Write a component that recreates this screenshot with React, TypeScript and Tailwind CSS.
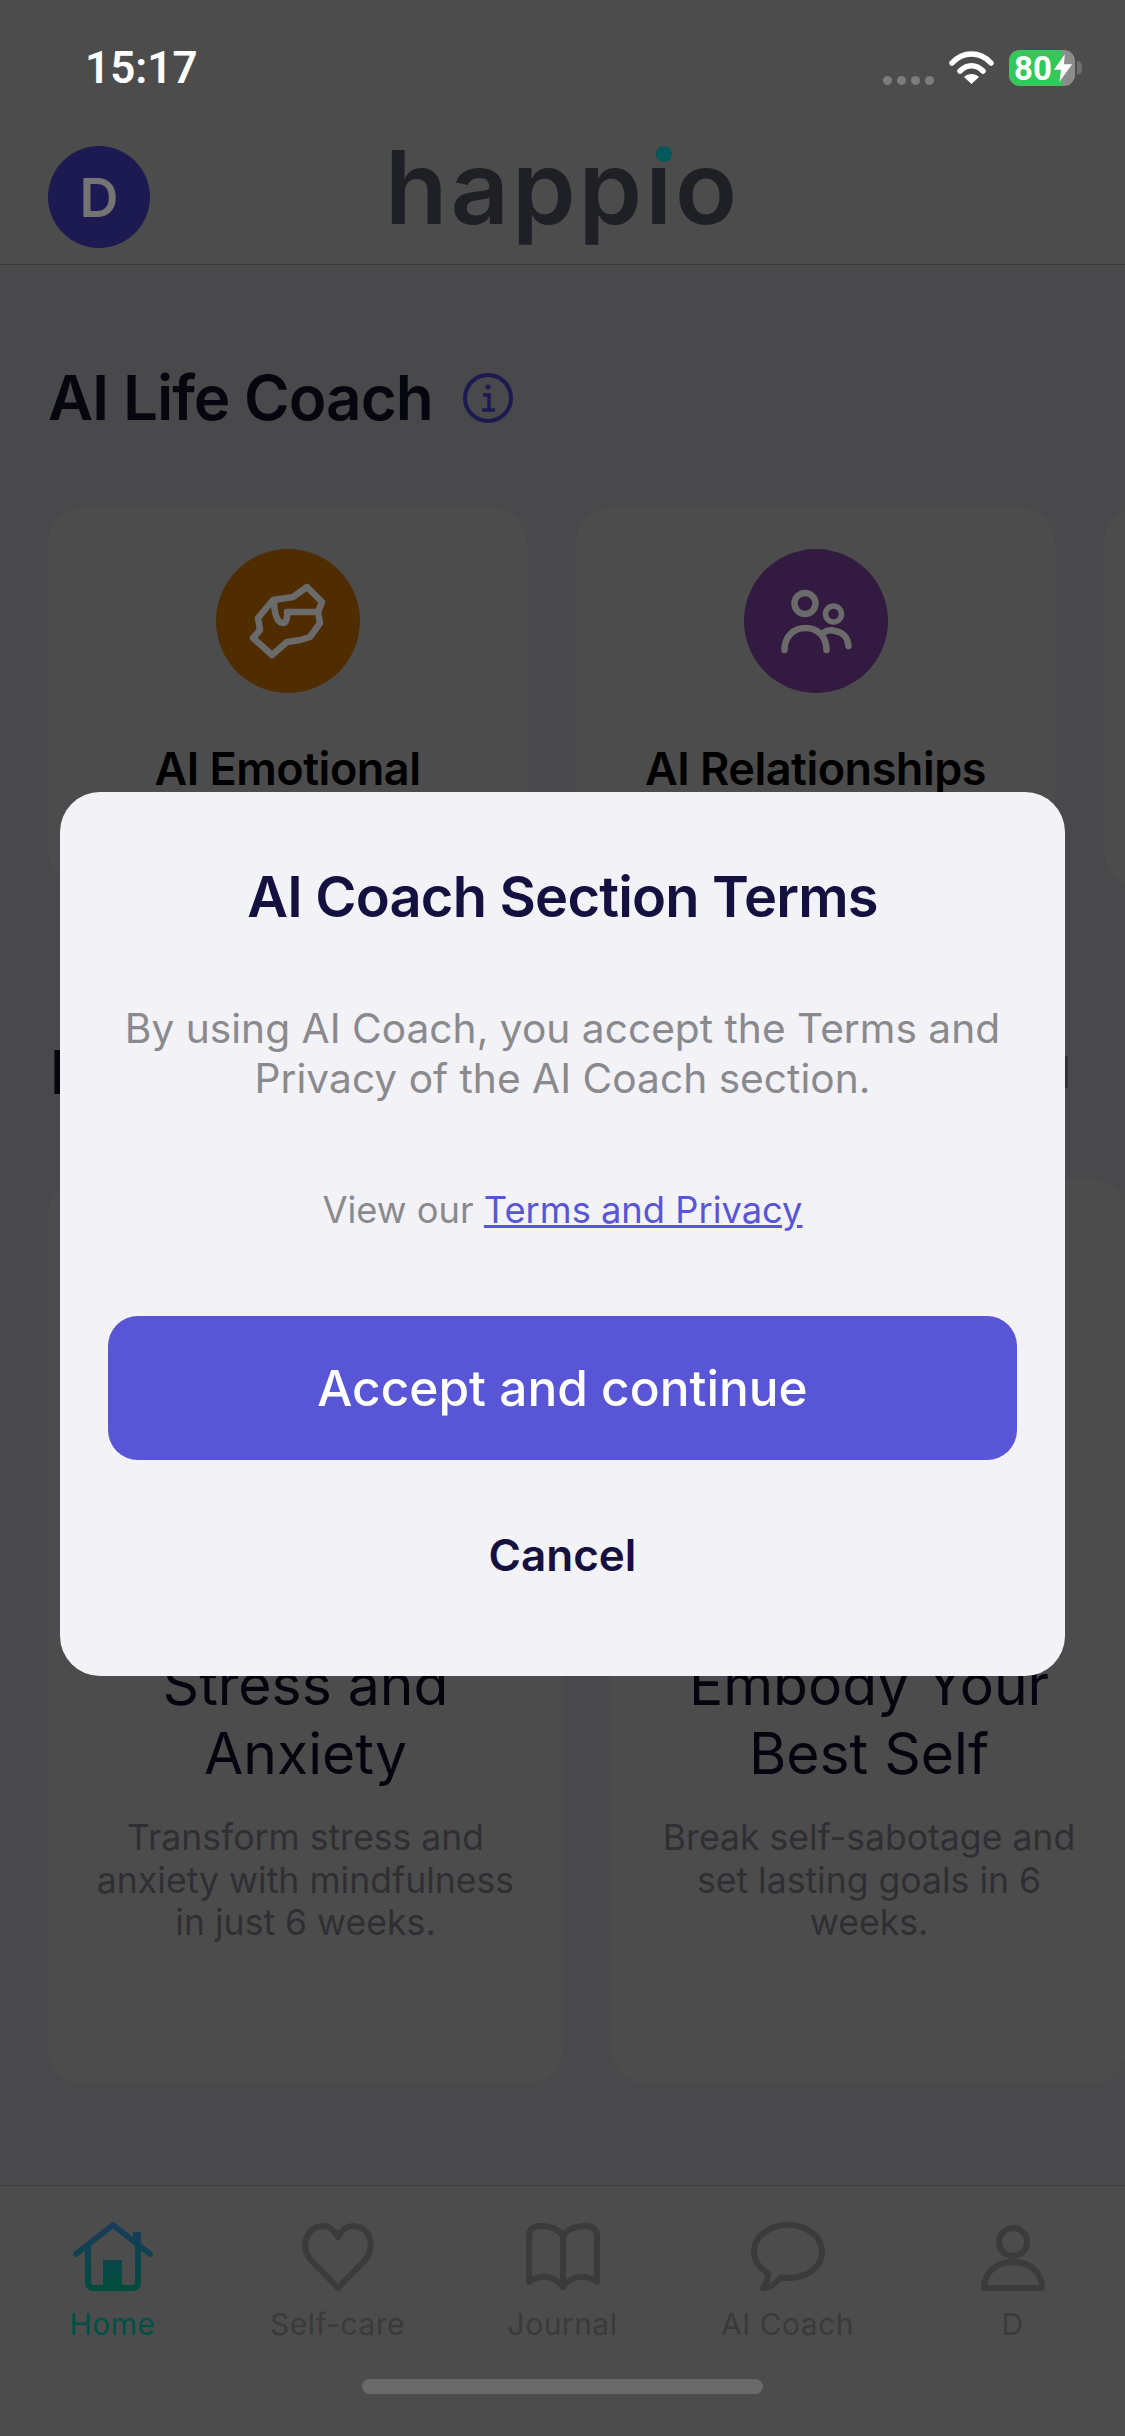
import React from 'react';

const navItems = ['Home', 'Self-care', 'Journal', 'AI Coach', 'D'];

function WifiIcon() {
  return (
    <svg width="45" height="34" viewBox="0 0 45 34" fill="none" stroke="#fff" strokeWidth="5.5" strokeLinecap="round">
      <path d="M3 12C14 0 31 0 42 12" />
      <path d="M11 20C18 13 27 13 34 20" />
      <path d="M22.5 33L15 26C19 22 26 22 30 26Z" fill="#fff" stroke="none" />
    </svg>
  );
}

function BatteryIcon() {
  return (
    <div className="flex items-center gap-[2px]">
      <div className="relative w-[66px] h-[36px] rounded-[11px] bg-[#8c8c8c]">
        <div className="absolute inset-y-0 left-0 w-[53px] rounded-l-[11px] bg-[#34c759]" />
        <div className="absolute inset-0 flex items-center pl-[5px] text-white text-[33px] leading-none font-bold font-['Roboto',sans-serif]">
          80
          <svg width="20" height="30" viewBox="0 0 22 30" fill="#fff" className="ml-[1px]">
            <path d="M13 0L1 17H9L7 30L21 11H12Z" />
          </svg>
        </div>
      </div>
      <div className="w-[5px] h-[14px] rounded-r-full bg-[#6e6e6e]" />
    </div>
  );
}

function StatusBar() {
  return (
    <div className="h-[130px] flex items-center justify-between pl-[85px] pr-[43px] pt-[6px] bg-[#4c4c4c]">
      <span className="text-white text-[44px] font-semibold leading-none font-['Roboto',sans-serif]">15:17</span>
      <div className="flex items-center">
        <div className="flex gap-[5px] mt-[24px] mr-[15px]">
          {[0, 1, 2, 3].map(i => (
            <div key={i} className="w-[9px] h-[9px] rounded-full bg-[#7c7c7c]" />
          ))}
        </div>
        <WifiIcon />
        <div className="ml-[15px]">
          <BatteryIcon />
        </div>
      </div>
    </div>
  );
}

function Header() {
  return (
    <div className="h-[135px] grid grid-cols-[1fr_auto_1fr] items-center px-[48px] bg-[#4c4c4c] border-b border-[#3a3a3a]">
      <div className="w-[102px] h-[102px] rounded-full bg-[#1c1a50] flex items-center justify-center text-[#747474] text-[54px] font-semibold">
        D
      </div>
      <div className="relative mb-[20px] text-[#1e2025] text-[102px] leading-none font-semibold tracking-[3px]">
        happio
        <div className="absolute right-[68px] top-[10px] w-[16px] h-[16px] rounded-full bg-[#00595a] outline-[5px] outline-[#4c4c4c]" />
      </div>
      <div />
    </div>
  );
}

function InfoIcon() {
  return (
    <svg width="50" height="50" viewBox="0 0 50 50" fill="none" stroke="#1c1a50" strokeWidth="4">
      <circle cx="25" cy="25" r="23" />
      <circle cx="25" cy="14" r="2.5" fill="#1c1a50" stroke="none" />
      <path d="M20 22H26V36M19 37H32" strokeWidth="3.5" />
    </svg>
  );
}

function HandsIcon() {
  return (
    <svg width="96" height="96" viewBox="30 33 96 96" fill="none" stroke="#6b6b6b" strokeWidth="6.5" strokeLinejoin="round" strokeLinecap="round">
      <path d="M43 98L50 90L48 78L63 60L83 57L97 47L112 62L108 72L110 83L100 97L90 100L77 102L62 115Z" />
      <path d="M64 61C64 70 66 83 73 83C78 83 77 72 77 72H108" />
    </svg>
  );
}

function PeopleIcon() {
  return (
    <svg width="96" height="96" viewBox="33 33 96 96" fill="none" stroke="#6b6b6b" strokeWidth="6.5" strokeLinecap="round">
      <circle cx="70" cy="63.5" r="10.5" />
      <circle cx="98.5" cy="74" r="8" strokeWidth="5.5" />
      <path d="M49.5 110C49.5 97 58 88 70.5 88C83 88 91.5 97 91.5 110" />
      <path d="M88 93C92 90 97 90 100 91C108 92 113 98 113.5 106" />
    </svg>
  );
}

function SmallCard({ title, circle, icon }: { title?: string; circle: string; icon?: React.ReactNode }) {
  return (
    <div className="w-[479px] h-[380px] shrink-0 rounded-[36px] bg-[#4c4c4c] flex flex-col items-center pt-[42px]">
      <div className={`w-[144px] h-[144px] shrink-0 rounded-full flex items-center justify-center ${circle}`}>{icon}</div>
      <div className="mt-[48px] text-black text-[45px] leading-[56px] font-semibold tracking-[-0.5px]">{title}</div>
    </div>
  );
}

function ProgramCard({ width, title, desc }: { width: string; title: string[]; desc: string[] }) {
  return (
    <div className={`${width} h-[905px] shrink-0 rounded-[36px] bg-[#4c4c4c] flex flex-col items-center pt-[471px] text-center`}>
      <div className="text-[#04040f] text-[57px] leading-[69px] font-normal">
        {title.map(line => (
          <div key={line}>{line}</div>
        ))}
      </div>
      <div className="mt-[29px] text-[#2f2f33] text-[35.6px] leading-[42.5px]">
        {desc.map(line => (
          <div key={line}>{line}</div>
        ))}
      </div>
    </div>
  );
}

function NavIcon({ name }: { name: string }) {
  if (name === 'Home') {
    return (
      <svg width="80" height="70" viewBox="0 0 80 70" fill="none" strokeWidth="6" strokeLinecap="round" strokeLinejoin="round">
        <defs>
          <linearGradient id="homeGrad" gradientUnits="userSpaceOnUse" x1="40" y1="0" x2="40" y2="68">
            <stop offset="0" stopColor="#1b3a5e" />
            <stop offset="1" stopColor="#004d3c" />
          </linearGradient>
        </defs>
        <path d="M3 32L40 3L77 32" stroke="url(#homeGrad)" />
        <path d="M64 22V10" stroke="url(#homeGrad)" strokeWidth="8" strokeLinecap="butt" />
        <path d="M15 25V60Q15 66 21 66H59Q65 66 65 60V25" stroke="url(#homeGrad)" />
        <rect x="30" y="38" width="19" height="28" fill="url(#homeGrad)" stroke="none" />
      </svg>
    );
  }
  const common = { fill: 'none', stroke: '#3b3b3d', strokeWidth: 6, strokeLinecap: 'round' as const, strokeLinejoin: 'round' as const };
  if (name === 'Self-care') {
    return (
      <svg width="74" height="70" viewBox="0 0 74 70" {...common}>
        <path d="M37 66L10 38C-1 25 5 5 21 4C29 4 34 9 37 15C40 9 45 4 53 4C69 5 75 25 64 38Z" />
      </svg>
    );
  }
  if (name === 'Journal') {
    return (
      <svg width="76" height="70" viewBox="0 0 76 70" {...common}>
        <path d="M38 14C33 6 25 4 15 4C8 4 4 8 4 14V60C15 52 29 53 38 65C47 53 61 52 72 60V14C72 8 68 4 61 4C51 4 43 6 38 14Z" />
        <path d="M38 14V65" />
      </svg>
    );
  }
  if (name === 'AI Coach') {
    return (
      <svg width="74" height="70" viewBox="0 0 74 70" {...common}>
        <path d="M37 3C55 3 71 14 71 30C71 46 55 56 37 56C35 56 32 56 30 55C26 60 20 66 12 66C15 62 17 56 17 51C8 46 3 39 3 30C3 14 19 3 37 3Z" />
      </svg>
    );
  }
  return (
    <svg width="64" height="70" viewBox="0 0 64 70" {...common}>
      <circle cx="32" cy="20" r="14" />
      <path d="M3 66C3 50 16 40 32 40C48 40 61 50 61 66Z" />
    </svg>
  );
}

function BottomNav() {
  return (
    <div className="h-[251px] bg-[#4c4c4c] border-t border-[#3a3a3a] flex flex-col mt-auto">
      <div className="grid grid-cols-5 pt-[35px]">
        {navItems.map(item => (
          <div key={item} className="flex flex-col items-center">
            <div className="h-[72px] flex items-center justify-center">
              <NavIcon name={item} />
            </div>
            <div className={`mt-[13px] text-[30px] leading-[36px] tracking-[0.5px] ${item === 'Home' ? 'text-[#005046]' : 'text-[#3a3a3c]'}`}>
              {item}
            </div>
          </div>
        ))}
      </div>
      <div className="mt-[37px] mx-auto w-[401px] h-[15px] rounded-full bg-[#696969]" />
    </div>
  );
}

function TermsModal() {
  return (
    <div className="absolute left-[60px] top-[792px] w-[1005px] h-[884px] rounded-[40px] bg-[#f2f2f7] px-[48px] flex flex-col items-center text-center">
      <h2 className="mt-[70px] text-[#14103f] text-[56px] leading-[70px] font-semibold tracking-[-0.8px]">AI Coach Section Terms</h2>
      <p className="mt-[72px] text-[#8a8a8e] text-[40.7px] leading-[49.5px]">
        By using AI Coach, you accept the Terms and
        <br />
        Privacy of the AI Coach section.
      </p>
      <p className="mt-[85px] text-[#8a8a8e] text-[36.3px] leading-[44px]">
        View our <span className="text-[#5856d6] underline">Terms and Privacy</span>
      </p>
      <button type="button" className="mt-[84px] w-full h-[144px] shrink-0 rounded-[30px] bg-[#5856d6] text-white text-[49.6px] font-medium">
        Accept and continue
      </button>
      <button type="button" className="mt-[67px] text-[#14103f] text-[44px] leading-[56px] font-semibold">
        Cancel
      </button>
    </div>
  );
}

export default function App() {
  return (
    <div className="relative w-[1125px] h-[2436px] overflow-hidden bg-[#49494b] flex flex-col font-['Inter',sans-serif]">
      <StatusBar />
      <Header />

      <div className="mt-[97px] pl-[48px] h-[72px] flex items-center gap-[30px]">
        <h1 className="text-[#06060f] text-[62px] leading-[72px] font-semibold tracking-[-1px]">AI Life Coach</h1>
        <InfoIcon />
      </div>

      <div className="mt-[73px] pl-[48px] flex gap-[49px]">
        <SmallCard title="AI Emotional" circle="bg-[#4f2d00]" icon={<HandsIcon />} />
        <SmallCard title="AI Relationships" circle="bg-[#321a41]" icon={<PeopleIcon />} />
        <SmallCard circle="bg-[#003c39]" />
      </div>

      <div className="mt-[149px] pl-[50px] pr-[54px] h-[72px] flex items-center justify-between">
        <h2 className="text-[#06060f] text-[60px] leading-[72px] font-semibold">Programs</h2>
        <span className="text-[#2f2f33] text-[44px] font-normal">See all</span>
      </div>

      <div className="mt-[71px] pl-[48px] flex gap-[48px]">
        <ProgramCard width="w-[515px]" title={['Stress and', 'Anxiety']} desc={['Transform stress and', 'anxiety with mindfulness', 'in just 6 weeks.']} />
        <ProgramCard width="w-[516px]" title={['Embody Your', 'Best Self']} desc={['Break self-sabotage and', 'set lasting goals in 6', 'weeks.']} />
      </div>

      <BottomNav />
      <TermsModal />
    </div>
  );
}
